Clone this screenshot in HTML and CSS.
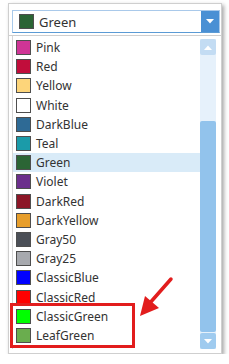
FILE: index.html
```html
<!DOCTYPE html>
<html lang="en">
<head>
  <meta charset="UTF-8" />
  <title>Color Picker</title>
  <link rel="stylesheet" href="styles.css">
</head>
<body>

<div class="frame">
  <!-- Closed combo -->
  <div class="combo">
    <span class="swatch" style="background:#2b6535"></span>
    <span class="combo-text">Green</span>
    <div class="combo-btn">
      <svg width="8" height="5" viewBox="0 0 8 5"><path d="M0 0 H8 L4 4.5 Z" fill="#fff"/></svg>
    </div>
  </div>

  <!-- Popup list -->
  <div class="popup">
    <div class="items">
      <div class="item"><span class="swatch" style="background:#cf3596"></span>Pink</div>
      <div class="item"><span class="swatch" style="background:#c10d3b"></span>Red</div>
      <div class="item"><span class="swatch" style="background:#fdd57a"></span>Yellow</div>
      <div class="item"><span class="swatch" style="background:#ffffff"></span>White</div>
      <div class="item"><span class="swatch" style="background:#2e6a95"></span>DarkBlue</div>
      <div class="item"><span class="swatch" style="background:#1b9ba9"></span>Teal</div>
      <div class="item selected"><span class="swatch" style="background:#2b6535"></span>Green</div>
      <div class="item"><span class="swatch" style="background:#6b2e8c"></span>Violet</div>
      <div class="item"><span class="swatch" style="background:#8c1627"></span>DarkRed</div>
      <div class="item"><span class="swatch" style="background:#e79e2b"></span>DarkYellow</div>
      <div class="item"><span class="swatch" style="background:#4b4f57"></span>Gray50</div>
      <div class="item"><span class="swatch" style="background:#a7a9ae"></span>Gray25</div>
      <div class="item"><span class="swatch" style="background:#0000ff"></span>ClassicBlue</div>
      <div class="item"><span class="swatch" style="background:#ff0000"></span>ClassicRed</div>
      <div class="item"><span class="swatch" style="background:#00ff00"></span>ClassicGreen</div>
      <div class="item"><span class="swatch" style="background:#6aad4e"></span>LeafGreen</div>
    </div>
    <div class="scrollbar">
      <div class="sb-btn">
        <svg width="8" height="5" viewBox="0 0 8 5"><path d="M0 5 H8 L4 0.5 Z" fill="#fff"/></svg>
      </div>
      <div class="sb-space"></div>
      <div class="sb-thumb"></div>
      <div class="sb-btn">
        <svg width="8" height="5" viewBox="0 0 8 5"><path d="M0 0 H8 L4 4.5 Z" fill="#fff"/></svg>
      </div>
    </div>
  </div>
</div>

<!-- Annotation -->
<div class="callout"></div>
<svg class="arrow" width="50" height="50" viewBox="0 0 50 50">
  <path d="M39 5 L17 30" stroke="#e21d1d" stroke-width="3.5" stroke-linecap="round"/>
  <path d="M8 42 L13 22 L27 34 Z" fill="#e21d1d"/>
</svg>

</body>
</html>
```

FILE: styles.css
```css
body {
  margin: 0;
  padding: 3px 0 0 8px;
  background: #fff;
  font-family: "Noto Sans", "Open Sans", sans-serif;
  color: #333;
}

.frame {
  width: 212px;
  height: 349px;
  background: #fff;
  border: 1px solid #cfcfcf;
  box-shadow: 2px 2px 4px rgba(0,0,0,0.35);
  display: flex;
  flex-direction: column;
}

.combo {
  margin: 6px 1px 0 3px;
  height: 21px;
  border: 1px solid #a9c9ea;
  border-bottom-color: #5b9bd5;
  display: flex;
  align-items: center;
  padding-left: 6px;
}

.combo-text {
  font-size: 13px;
  margin-left: 5px;
  flex: 1;
}

.combo-btn {
  width: 18px;
  height: 100%;
  background: #4a90d4;
  display: flex;
  align-items: center;
  justify-content: center;
}

.swatch {
  width: 13px;
  height: 13px;
  border: 1px solid #4e4e4e;
  flex-shrink: 0;
}

.popup {
  margin-top: 2px;
  border-top: 1px solid #cfcfcf;
  flex: 1;
  display: flex;
  padding: 0 3px 4px 3px;
}

.items {
  flex: 1;
  border-left: 1px solid #d6d6d6;
  padding-top: 2px;
}

.item {
  height: 19.2px;
  display: flex;
  align-items: center;
  gap: 5px;
  padding-left: 3px;
  font-size: 12px;
}

.item.selected {
  background: #d9ebf8;
}

.scrollbar {
  width: 16px;
  margin: 3px 2px 0 0;
  background: #e6f1fb;
  display: flex;
  flex-direction: column;
}

.sb-btn {
  height: 16px;
  background: #c3dcf3;
  border-radius: 2px;
  display: flex;
  align-items: center;
  justify-content: center;
}

.sb-btn:last-child {
  background: #9fcbef;
}

.sb-space {
  height: 66px;
}

.sb-thumb {
  flex: 1;
  background: #92c3ec;
  border-radius: 2px;
  margin-bottom: 1px;
}

.callout {
  position: absolute;
  left: 10px;
  top: 303px;
  width: 119px;
  height: 39px;
  border: 3px solid #e21d1d;
}

.arrow {
  position: absolute;
  left: 132px;
  top: 274px;
}
```
